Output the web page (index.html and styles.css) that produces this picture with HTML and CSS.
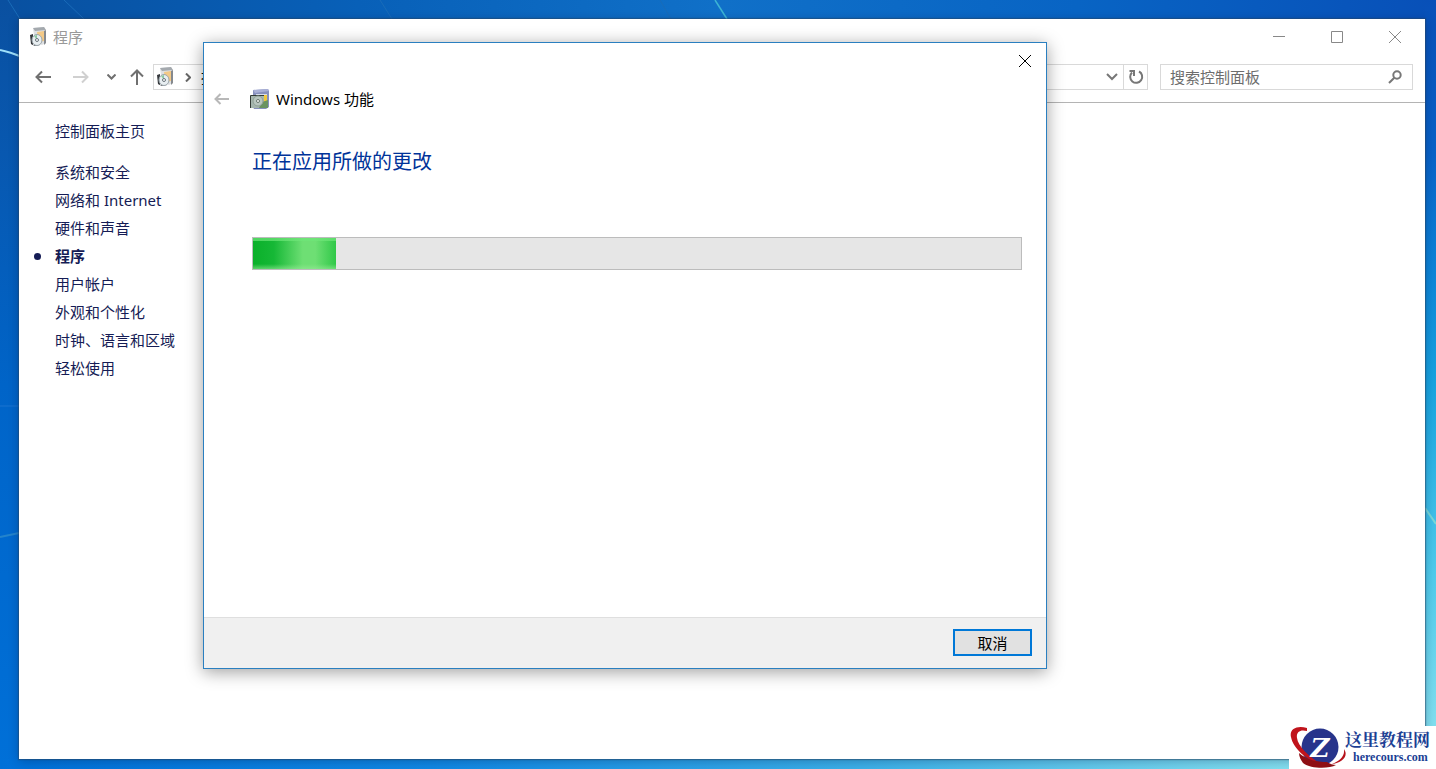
FILE: index.html
```
<!DOCTYPE html>
<html lang="zh-CN">

<head>
    <meta charset="UTF-8">
    <meta name="viewport" content="width=device-width, initial-scale=1.0">
    <title>程序</title>
    <link rel="stylesheet" href="styles.css">
</head>

<body>
    <svg class="rays" preserveAspectRatio="none" viewBox="0 0 1436 769" aria-hidden="true">
        <path d="M0 50Q10 52 22 57" stroke="#9fe0fa" stroke-width="2" />
        <path d="M8 0L20 19M64 0L84 19M380 0L392 19M660 0L671 19" stroke="#1a6cb8" />
        <path d="M715 0L727 19" stroke="#3cb4d4" stroke-width="1.5" />
        <path d="M0 537L19 533" stroke="#2484cc" stroke-width="2" />
        <path d="M0 406H19" stroke="#1a74d0" />
        <path d="M1425 508L1436 524" stroke="#7ad8d8" stroke-width="2" />
    </svg>

    <!-- control panel -->
    <div class="window">
        <div class="title-bar">
            <svg class="app-icon" viewBox="0 0 18 20">
                <path d="M3 1L14 0L16 3V16L12 18L5 16Z" fill="#dfe1e3" />
                <path d="M3 1L14 0L16 3L5 4Z" fill="#a4a9ae" />
                <path d="M7 5L14 4V14L8 15Z" fill="#f3c987" />
                <path d="M14 4L16 3V16L14 18Z" fill="#85898e" />
                <path d="M0 8L3 7V18L1 17Z" fill="#34373b" />
                <path d="M1 17L4 18L10 19L5 19Z" fill="#34373b" />
                <ellipse cx="7" cy="13" rx="5" ry="5.5" fill="#e8eef1" stroke="#9aa5ab" />
                <path d="M7 13L4 9L7 8Z" fill="#8cc9a1" />
                <circle cx="7" cy="13" r="1.5" fill="#fff" stroke="#69747b" />
            </svg>
            <span class="title">程序</span>
            <div class="window-buttons">
                <button aria-label="最小化"><svg viewBox="0 0 12 12"><path d="M0 5.5H12" /></svg></button>
                <button aria-label="最大化"><svg viewBox="0 0 12 12"><path d="M.5 .5H11.5V11.5H.5Z" /></svg></button>
                <button aria-label="关闭"><svg viewBox="0 0 12 12"><path d="M0 0L12 12M12 0L0 12" /></svg></button>
            </div>
        </div>

        <div class="nav-bar">
            <div class="nav-buttons">
                <button aria-label="后退"><svg width="16" height="14" viewBox="0 0 16 14"><path d="M16 7H2M7 1.5L1.5 7L7 12.5" /></svg></button>
                <button class="off" aria-label="前进" disabled><svg width="16" height="14" viewBox="0 0 16 14"><path d="M0 7H14M9 1.5L14.5 7L9 12.5" /></svg></button>
                <button aria-label="最近位置"><svg width="9" height="6" viewBox="0 0 9 6"><path d="M.5 .5L4.5 4.5L8.5 .5" /></svg></button>
                <button aria-label="上移"><svg width="14" height="16" viewBox="0 0 14 16"><path d="M7 16V2M1 7.5L7 1.5L13 7.5" /></svg></button>
            </div>
            <div class="address">
                <svg class="app-icon" viewBox="0 0 18 20">
                    <path d="M3 1L14 0L16 3V16L12 18L5 16Z" fill="#dfe1e3" />
                    <path d="M3 1L14 0L16 3L5 4Z" fill="#a4a9ae" />
                    <path d="M7 5L14 4V14L8 15Z" fill="#f3c987" />
                    <path d="M14 4L16 3V16L14 18Z" fill="#85898e" />
                    <path d="M0 8L3 7V18L1 17Z" fill="#34373b" />
                    <path d="M1 17L4 18L10 19L5 19Z" fill="#34373b" />
                    <ellipse cx="7" cy="13" rx="5" ry="5.5" fill="#e8eef1" stroke="#9aa5ab" />
                    <path d="M7 13L4 9L7 8Z" fill="#8cc9a1" />
                    <circle cx="7" cy="13" r="1.5" fill="#fff" stroke="#69747b" />
                </svg>
                <svg class="crumb-arrow" width="6" height="9" viewBox="0 0 6 9"><path d="M1 .5L5 4.5L1 8.5" /></svg>
                <span>控制面板</span>
                <button class="drop" aria-label="以前的位置"><svg width="12" height="8" viewBox="0 0 12 8"><path d="M1 1L6 6L11 1" /></svg></button>
                <button class="refresh" aria-label="刷新"><svg width="16" height="16" viewBox="0 0 16 16"><path d="M11 2.5A6 6 0 1 1 4 3.5M1.5 2H6V7" /></svg></button>
            </div>
            <div class="search">
                <input type="text" placeholder="搜索控制面板" aria-label="搜索控制面板">
                <svg width="14" height="14" viewBox="0 0 14 14"><circle cx="9" cy="5" r="3.7" /><path d="M6.3 7.7L1 13" /></svg>
            </div>
        </div>

        <nav class="side">
            <a class="home" href="#">控制面板主页</a>
            <a href="#">系统和安全</a>
            <a href="#">网络和 Internet</a>
            <a href="#">硬件和声音</a>
            <a class="current" href="#">程序</a>
            <a href="#">用户帐户</a>
            <a href="#">外观和个性化</a>
            <a href="#">时钟、语言和区域</a>
            <a href="#">轻松使用</a>
        </nav>
    </div>

    <!-- windows features dialog -->
    <div class="dialog" role="dialog" aria-labelledby="dialog-title">
        <button class="dialog-close" aria-label="关闭"><svg width="12" height="12" viewBox="0 0 12 12"><path d="M0 0L12 12M12 0L0 12" /></svg></button>
        <div class="dialog-head">
            <button class="dialog-back" aria-label="后退" disabled><svg width="16" height="12" viewBox="0 0 16 12"><path d="M15 6H2M6.5 1L1.5 6L6.5 11" /></svg></button>
            <svg class="feature-icon" width="20" height="20" viewBox="0 0 20 20">
                <path d="M3 1L18 0L19 2V18L16 20H4L3 18Z" fill="#8790bd" />
                <path d="M3 1L18 0L19 2L5 4Z" fill="#a9b0d6" />
                <path d="M6 5H17V17H6Z" fill="#d5dcec" />
                <path d="M11 6H17V12L13 14Z" fill="#f2c83c" />
                <path d="M1 6H14V19H1Z" fill="#a5b5ad" />
                <path d="M.5 19V6.5H14" fill="none" stroke="#333a35" />
                <path d="M12 13L18 11V19H9Z" fill="#6a9360" />
                <circle cx="8" cy="12" r="5" fill="#b9c6bf" stroke="#8fa096" />
                <circle cx="8" cy="12" r="1.5" fill="#fff" stroke="#66756c" />
            </svg>
            <span id="dialog-title">Windows 功能</span>
        </div>
        <div class="dialog-body">
            <h1>正在应用所做的更改</h1>
            <progress value="83" max="768" aria-label="正在应用所做的更改"></progress>
        </div>
        <div class="dialog-foot">
            <button class="cancel">取消</button>
        </div>
    </div>

    <div class="watermark">
        <svg width="58" height="42" viewBox="0 0 58 42">
            <circle cx="31" cy="21" r="18.5" fill="#27348b" />
            <path d="M18 2C8 -1 0 3 2 11C4 22 17 34 32 38C20 31 9 20 8 12C7 6 11 3 18 5Z" fill="#c0141c" />
            <path d="M10 27C18 34 28 36 38 36C41 38 44 39 47 39C40 43 22 43 14 37C12 34 10 31 10 27Z" fill="#8e0f14" />
            <path d="M55 23C60 30 53 37 43 38C50 35 56 31 55 23Z" fill="#b5121b" />
            <text class="logo-letter" x="31" y="31" text-anchor="middle">Z</text>
        </svg>
        <div class="watermark-text">
            <strong>这里教程网</strong>
            <span>herecours.com</span>
        </div>
    </div>
</body>

</html>
```
FILE: styles.css
```
* {
    box-sizing: border-box;
}

body {
    margin: 0;
    min-height: 100vh;
    padding: 19px 11px 10px 19px;
    display: flex;
    position: relative;
    overflow: hidden;
    font-family: "Noto Sans", "Noto Sans CJK SC", sans-serif;
    font-size: 15px;
    line-height: 20px;
    background:
        linear-gradient(90deg, #0070d8, #1088e4 30%, #3cb0e8 60%, #84e0f0 90%) bottom / 100% 10px no-repeat,
        linear-gradient(#0850b8, #0862c8 20%, #0c84d8 35%, #18a4e0 50%, #50ccec 75%, #90e4f0) right / 11px 100% no-repeat,
        linear-gradient(#0a50a0, #0858b0 20%, #0064c8 50%, #0070d8) left / 19px 100% no-repeat,
        linear-gradient(90deg, #0850a0, #0860b8 25%, #1070c8 50%, #0864c4 75%, #0850b8);
}

button {
    margin: 0;
    padding: 0;
    border: 0;
    background: none;
    font: inherit;
    display: flex;
    align-items: center;
    justify-content: center;
}

svg {
    display: block;
    flex: none;
    fill: none;
}

.rays {
    position: absolute;
    top: 0;
    left: 0;
    width: 100%;
    height: 100%;
}

.window {
    flex: 1;
    position: relative;
    background: white;
    box-shadow: 0 0 1px 1px rgba(40, 70, 100, 0.5), 0 2px 10px rgba(0, 20, 60, 0.3);
}

.title-bar {
    height: 36px;
    padding: 0 1px 0 11px;
    display: flex;
    align-items: center;
    gap: 5px;
    color: #999;
}

.app-icon {
    width: 18px;
    height: 20px;
}

.window-buttons {
    margin-left: auto;
    display: flex;
}

.window-buttons button {
    width: 58px;
    height: 36px;
}

.window-buttons svg {
    width: 12px;
    height: 12px;
    stroke: #888;
}

.nav-bar {
    height: 48px;
    padding: 9px 12px 12px 16px;
    display: flex;
    margin-bottom: 18px;
    border-bottom: 1px solid #b4b4b4;
}

.nav-buttons {
    width: 118px;
    display: flex;
    align-items: center;
    gap: 18px;
    stroke: #707070;
    stroke-width: 2;
}

.nav-buttons button:nth-child(2) {
    margin-left: 4px;
}

.nav-buttons button:last-child {
    margin-left: -4px;
}

.nav-buttons .off {
    stroke: #d0d0d0;
}

.address {
    flex: 1;
    height: 26px;
    padding-left: 3px;
    margin-right: 12px;
    display: flex;
    align-items: center;
    border: 1px solid #d9d9d9;
}

.crumb-arrow {
    margin: 0 10px;
    stroke: #666;
    stroke-width: 2;
}

.drop {
    width: 22px;
    height: 24px;
    margin-left: auto;
    stroke: #777;
    stroke-width: 2;
}

.refresh {
    width: 24px;
    height: 24px;
    border-left: 1px solid #d9d9d9;
    stroke: #777;
    stroke-width: 2;
}

.search {
    width: 253px;
    height: 26px;
    padding: 0 10px 0 9px;
    display: flex;
    align-items: center;
    border: 1px solid #d9d9d9;
    stroke: #777;
    stroke-width: 2;
}

.search input {
    flex: 1;
    min-width: 0;
    padding: 0;
    border: 0;
    outline: 0;
    background: none;
    font: inherit;
}

.search input::placeholder {
    color: #6d6d6d;
}

.side {
    padding-left: 36px;
    display: flex;
    flex-direction: column;
    align-items: flex-start;
    gap: 8px;
}

.side a {
    color: #151c55;
    text-decoration: none;
}

.side .home {
    margin-bottom: 13px;
}

.side .current {
    position: relative;
    font-weight: bold;
}

.current::before {
    content: "";
    position: absolute;
    left: -21px;
    top: 7px;
    width: 7px;
    height: 7px;
    border-radius: 50%;
    background: #151c55;
}

.dialog {
    position: absolute;
    left: 203px;
    top: 42px;
    width: 844px;
    min-height: 627px;
    display: flex;
    flex-direction: column;
    background: white;
    border: 1px solid #2a7fc0;
    box-shadow: 0 3px 16px rgba(0, 0, 0, 0.38);
}

.dialog-close {
    width: 42px;
    height: 36px;
    align-self: flex-end;
    stroke: black;
}

.dialog-head {
    padding-left: 10px;
    margin-top: 10px;
    display: flex;
    align-items: center;
}

.dialog-back {
    margin-right: 20px;
    stroke: #b8b8b8;
    stroke-width: 2;
}

.feature-icon {
    margin-right: 6px;
}

.dialog-body {
    flex: 1;
    padding: 38px 24px 0 48px;
}

.dialog-body h1 {
    margin: 0 0 60px;
    font-size: 20px;
    font-weight: normal;
    line-height: 30px;
    color: #003399;
}

progress {
    display: block;
    width: 100%;
    height: 33px;
    appearance: none;
    border: 1px solid #bcbcbc;
    background: #e6e6e6;
}

progress::-webkit-progress-bar {
    background: #e6e6e6;
}

progress::-webkit-progress-value {
    background:
        linear-gradient(rgba(110, 230, 120, 0.7) 3px, transparent 3px, transparent 26px, rgba(150, 235, 150, 0.6)),
        linear-gradient(90deg, #0ab02a, #16b836 25%, #6edf74 60%, #6edf74 75%, #30c848);
}

.dialog-foot {
    padding: 11px 14px 12px;
    display: flex;
    justify-content: flex-end;
    background: #f0f0f0;
    border-top: 1px solid #dfdfdf;
}

.cancel {
    width: 79px;
    height: 27px;
    border: 2px solid #0078d7;
    background: #e1e1e1;
    color: black;
}

.watermark {
    position: absolute;
    right: 0;
    bottom: 0;
    width: 147px;
    height: 43px;
    display: flex;
    align-items: flex-start;
    background: white;
}

.logo-letter {
    font: italic bold 26px "DejaVu Serif", serif;
    fill: white;
}

.watermark-text {
    margin-left: -2px;
    padding-top: 2px;
    display: flex;
    flex-direction: column;
    color: #1c3f94;
    white-space: nowrap;
}

.watermark-text strong {
    font: bold 17px/22px "Noto Serif CJK SC", "Noto Sans CJK SC", serif;
}

.watermark-text span {
    padding-left: 8px;
    font: bold 12px/14px "Liberation Serif", serif;
}
```
